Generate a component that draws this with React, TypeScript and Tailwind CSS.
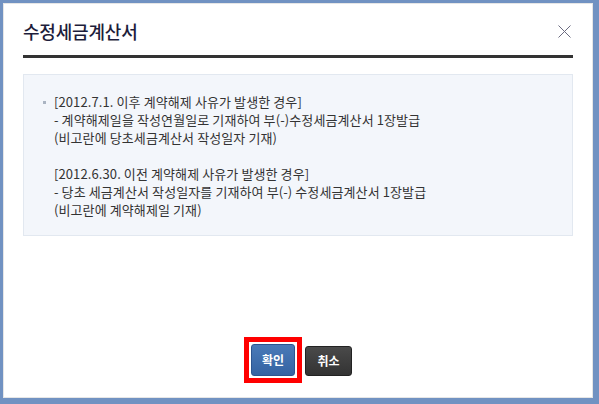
export default function App() {
  const font = { fontFamily: '"Noto Sans CJK KR", "Noto Sans", sans-serif' };

  return (
    <div className="w-[599px] h-[404px] bg-[#7192c2] pt-[3px] pl-[3px] pr-[6px] pb-[6px]" style={font}>
      <div className="h-full bg-white border border-[#e6e6e6] px-[19px] flex flex-col">
        <div className="flex items-center justify-between h-[51px] pt-[3px]">
          <h1 className="text-[18px] font-medium text-[#1d1d3b] tracking-[-0.2px]">수정세금계산서</h1>
          <svg width="13" height="13" viewBox="0 0 13 13" className="mr-[2px]">
            <path d="M0.5 0.5 L12.5 12.5 M12.5 0.5 L0.5 12.5" stroke="#6b6b80" strokeWidth="1" fill="none" />
          </svg>
        </div>
        <div className="h-[3px] bg-[#333333]" />

        <div className="mt-[16px] bg-[#f3f6fb] border border-[#e2e8f0] pl-[19px] pr-4 pt-[18px] pb-[16px] text-[13px] leading-[18px] text-[#333333] tracking-[0.1px]">
          <div className="flex">
            <span className="w-[11px] pt-[8px]">
              <span className="block w-[3px] h-[3px] bg-[#aab4c2]" />
            </span>
            <div>
              <p>[2012.7.1. 이후 계약해제 사유가 발생한 경우]</p>
              <p>- 계약해제일을 작성연월일로 기재하여 부(-)수정세금계산서 1장발급</p>
              <p>(비고란에 당초세금계산서 작성일자 기재)</p>
              <p>&nbsp;</p>
              <p>[2012.6.30. 이전 계약해제 사유가 발생한 경우]</p>
              <p>- 당초 세금계산서 작성일자를 기재하여 부(-) 수정세금계산서 1장발급</p>
              <p>(비고란에 계약해제일 기재)</p>
            </div>
          </div>
        </div>

        <div className="mt-auto mb-[14px] flex items-center justify-center gap-[3px]">
          <div className="border-[5px] border-[#ff0000] p-[2px]">
            <button className="w-[44px] h-[32px] rounded-[3px] bg-gradient-to-b from-[#4a7ab8] to-[#3563a2] border border-[#2d5590] text-white text-[12px] font-bold">
              확인
            </button>
          </div>
          <button className="w-[47px] h-[30px] mt-[2px] rounded-[3px] bg-gradient-to-b from-[#4a4a4a] to-[#333333] border border-[#222222] text-white text-[12px] font-bold">
            취소
          </button>
        </div>
      </div>
    </div>
  );
}
